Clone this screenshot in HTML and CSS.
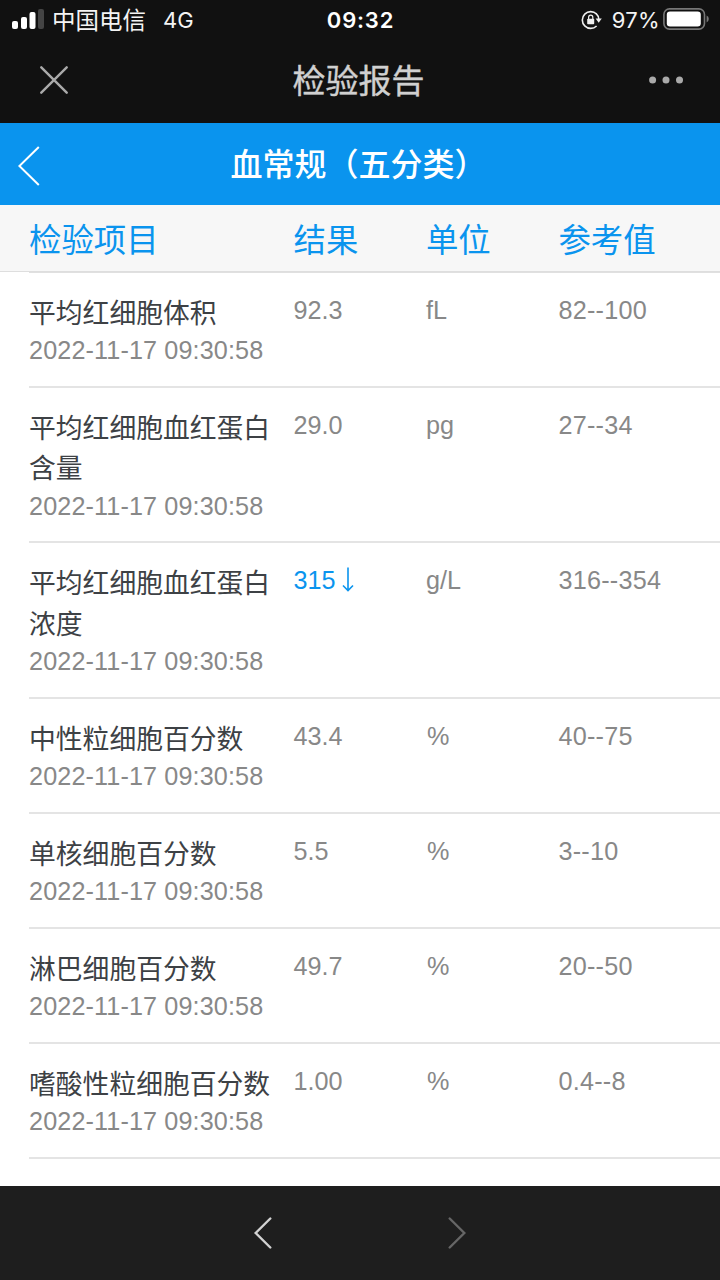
FILE: index.html
```html
<!DOCTYPE html>
<html lang="zh-CN">
<head>
	<meta charset="UTF-8">
	<title>检验报告</title>
	<link rel="stylesheet" href="styles.css">
</head>
<body>
	<div class="top">
		<div class="status">
			<div class="status-left">
				<svg class="signal" width="32" height="20" viewBox="0 0 32 20">
					<rect x="0" y="12" width="6" height="8" rx="2" fill="#fff"/>
					<rect x="9" y="8" width="6" height="12" rx="2" fill="#fff"/>
					<rect x="17.5" y="3" width="6" height="17" rx="2" fill="#fff"/>
					<rect x="26" y="0" width="6" height="20" rx="2" fill="#444"/>
				</svg>
				<span class="carrier">中国电信</span>
				<span class="net">4G</span>
			</div>
			<div class="time">09:32</div>
			<div class="status-right">
				<svg class="lock" width="21" height="20" viewBox="0 0 21 20">
					<path d="M15.6 4A8.4 8.4 0 1 0 15.6 16" fill="none" stroke="#eee" stroke-width="1.6"/>
					<path d="M15 3.4a8.6 8.6 0 0 1 2.8 6.2" fill="none" stroke="#eee" stroke-width="1.6"/>
					<path d="M14.6 8.6h6.2l-3.1 4.2z" fill="#eee"/>
					<rect x="6.2" y="8.8" width="7" height="5.4" rx=".8" fill="#eee"/>
					<path d="M7.6 9.2V7.2a2.1 2.1 0 0 1 4.2 0v2" fill="none" stroke="#eee" stroke-width="1.2"/>
				</svg>
				<span class="percent">97%</span>
				<svg class="battery" width="46" height="22" viewBox="0 0 46 22">
					<rect x=".9" y=".9" width="40.6" height="20.2" rx="5.6" fill="none" stroke="#777" stroke-width="1.6"/>
					<rect x="3.8" y="3.6" width="34" height="14.8" rx="3.2" fill="#fff"/>
					<path d="M43.6 7.6q2.2 1 2.2 3.4t-2.2 3.4z" fill="#777"/>
				</svg>
			</div>
		</div>
		<div class="bar">
			<svg class="close" width="28" height="28" viewBox="0 0 28 28"><path d="M1.3 1.3l25.4 25.4M26.7 1.3L1.3 26.7" stroke="#aaa" stroke-width="2.4" stroke-linecap="round"/></svg>
			<h1>检验报告</h1>
			<svg class="more" width="36" height="8" viewBox="0 0 36 8" fill="#aaa"><circle cx="3.6" cy="4" r="3.5"/><circle cx="17" cy="4" r="3.5"/><circle cx="30.5" cy="4" r="3.5"/></svg>
		</div>
	</div>
	<div class="title">
		<svg class="back" width="22" height="40" viewBox="0 0 22 40"><path d="M20.8 1L1.4 20l19.4 19" fill="none" stroke="#fff" stroke-width="2"/></svg>
		<h2>血常规（五分类）</h2>
	</div>
	<div class="head cols">
		<span>检验项目</span><span>结果</span><span>单位</span><span>参考值</span>
	</div>
	<div class="list">
		<div class="row cols">
			<div><p class="name">平均红细胞体积</p><p class="date">2022-11-17 09:30:58</p></div>
			<span class="val">92.3</span><span class="val">fL</span><span class="val ref">82--100</span>
		</div>
		<div class="row cols">
			<div><p class="name">平均红细胞血红蛋白含量</p><p class="date">2022-11-17 09:30:58</p></div>
			<span class="val">29.0</span><span class="val">pg</span><span class="val ref">27--34</span>
		</div>
		<div class="row cols">
			<div><p class="name">平均红细胞血红蛋白浓度</p><p class="date">2022-11-17 09:30:58</p></div>
			<span class="val low">315<svg class="down" width="12" height="25" viewBox="0 0 12 25"><path d="M6 .5v22.5M1 18.5l5 5 5-5" fill="none" stroke="#0a94ee" stroke-width="1.6"/></svg></span><span class="val">g/L</span><span class="val ref">316--354</span>
		</div>
		<div class="row cols">
			<div><p class="name">中性粒细胞百分数</p><p class="date">2022-11-17 09:30:58</p></div>
			<span class="val">43.4</span><span class="val pct">%</span><span class="val ref">40--75</span>
		</div>
		<div class="row cols">
			<div><p class="name">单核细胞百分数</p><p class="date">2022-11-17 09:30:58</p></div>
			<span class="val">5.5</span><span class="val pct">%</span><span class="val ref">3--10</span>
		</div>
		<div class="row cols">
			<div><p class="name">淋巴细胞百分数</p><p class="date">2022-11-17 09:30:58</p></div>
			<span class="val">49.7</span><span class="val pct">%</span><span class="val ref">20--50</span>
		</div>
		<div class="row cols">
			<div><p class="name">嗜酸性粒细胞百分数</p><p class="date">2022-11-17 09:30:58</p></div>
			<span class="val">1.00</span><span class="val pct">%</span><span class="val ref">0.4--8</span>
		</div>
	</div>
	<div class="foot">
		<svg width="18" height="32" viewBox="0 0 18 32"><path d="M16.3 1.5L1.7 16l14.6 14.5" fill="none" stroke="#d2d2d2" stroke-width="2.4" stroke-linecap="round"/></svg>
		<svg width="18" height="32" viewBox="0 0 18 32"><path d="M1.7 1.5L16.3 16 1.7 30.5" fill="none" stroke="#666" stroke-width="2.4" stroke-linecap="round"/></svg>
	</div>
</body>
</html>
```
FILE: styles.css
```css
*{margin: 0;padding: 0;box-sizing: border-box;}
body{width: 720px;height: 1280px;display: flex;flex-direction: column;overflow: hidden;background: #fff;font-family: "Liberation Sans","Noto Sans CJK SC",sans-serif;}
svg{display: block;flex: none;}

.top{height: 123px;background: #111;}
.status{height: 40px;display: grid;grid-template-columns: 1fr auto 1fr;align-items: center;padding: 0 11px 0 12px;color: #f4f4f4;font: 22px/40px Inter,"Noto Sans CJK SC",sans-serif;}
.status-left,.status-right{height: 40px;display: flex;align-items: center;}
.status-right{justify-content: flex-end;}
.signal{margin-top: -2px;}
.carrier{margin-left: 8px;padding-top: 1px;font-size: 23.5px;}
.net{margin-left: 17px;}
.time{font-weight: 600;letter-spacing: .8px;color: #fff;}
.lock{margin-right: 1px;}
.percent{margin-left: 9px;letter-spacing: .3px;}
.battery{margin: -2px 0 0 3px;}
.bar{height: 80px;display: flex;align-items: center;justify-content: space-between;padding: 0 35px 0 40px;}
.bar h1{padding-top: 3px;font-size: 33px;font-weight: 400;line-height: 80px;color: #d0d0d0;-webkit-text-stroke: .4px #d0d0d0;}

.title{height: 82px;display: grid;grid-template-columns: 22px 1fr 22px;align-items: center;padding: 3px 21px 0 18px;background: #0a94ee;}
.title h2{text-align: center;font-size: 32px;font-weight: 500;line-height: 79px;color: #fff;}

.cols{display: grid;grid-template-columns: 264.6px 132.4px 132.4px 1fr;}
.head{height: 67px;padding-left: 29px;background: #f7f7f7;border-bottom: 1px solid #dedede;font-size: 32.4px;line-height: 72px;color: #0a94ee;}
.list{flex: 1;margin-left: 29px;padding-top: .6px;box-shadow: inset 0 1px #e0e0e0;}
.row{padding: 20.3px 0 18.03px;border-bottom: 2px solid #e4e4e4;}
.name{width: 245px;padding-top: 1px;margin-bottom: -1px;font-size: 26.8px;line-height: 40.3px;color: #3d4145;}
.date{font-size: 25.2px;line-height: 34.5px;letter-spacing: .12px;color: #888;}
.val{display: flex;font-size: 25.2px;line-height: 35px;color: #888;}
.ref{letter-spacing: .25px;}
.pct{padding-left: 1px;}
.low{color: #0a94ee;}
.down{margin: 4px 0 0 6px;}

.foot{height: 94px;display: flex;justify-content: center;align-items: center;gap: 176px;background: #1e1e1e;}
```
